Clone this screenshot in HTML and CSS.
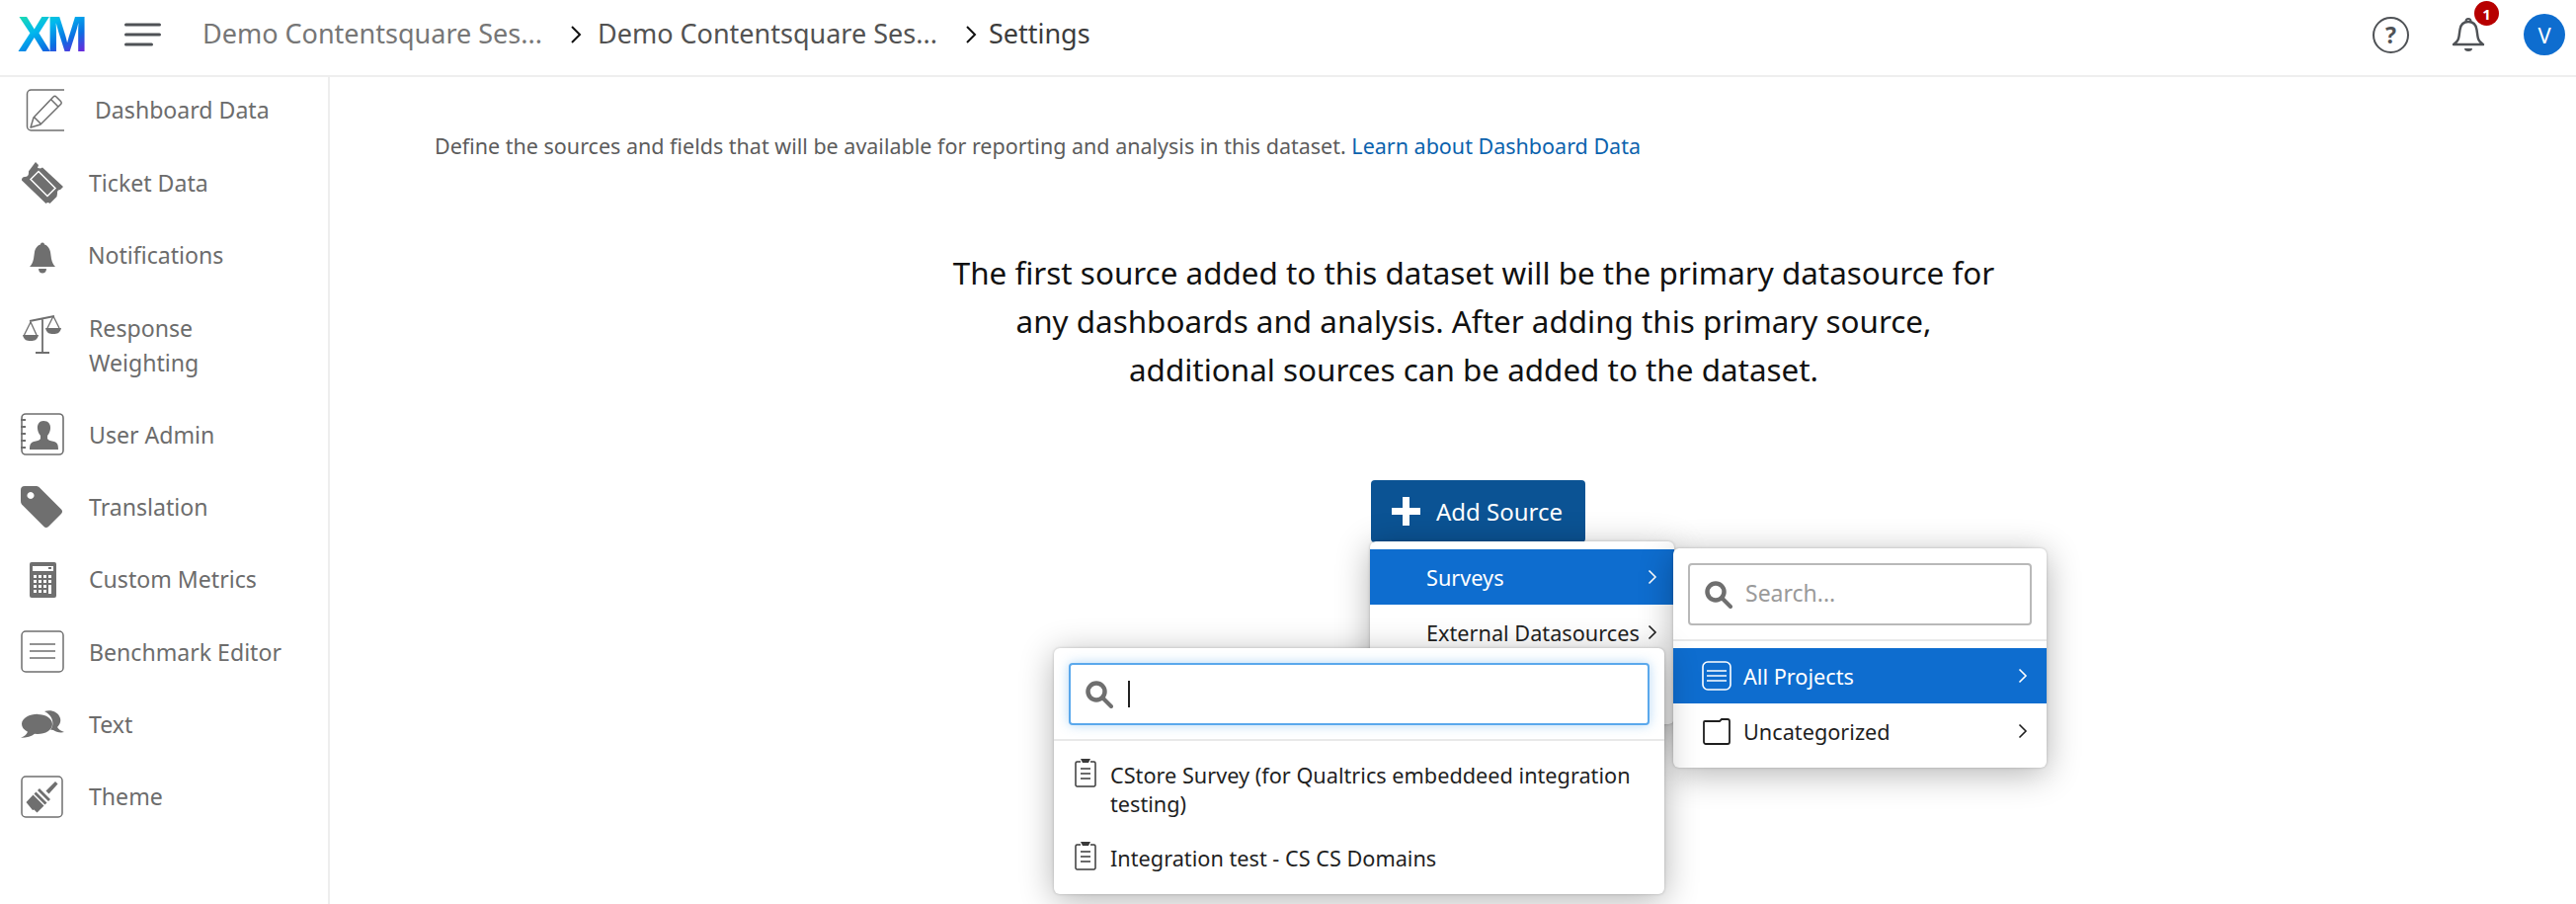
FILE: index.html
```html
<!DOCTYPE html>
<html lang="en">
<head>
<meta charset="utf-8">
<title>Settings</title>
<link rel="stylesheet" href="styles.css">
</head>
<body>
<div class="app">
  <header class="topbar">
    <div class="logo">XM</div>
    <svg class="burger" viewBox="0 0 37 24"><path d="M1.500 2h34M1.500 12h34M1.500 22h26" fill="none" stroke="#4f5256" stroke-width="3" stroke-linecap="round"/></svg>
    <nav class="crumbs">
      <span class="crumb crumb-first">Demo Contentsquare Ses...</span>
      <svg class="crumb-sep" viewBox="0 0 12 20"><path d="M2 2l8 8-8 8" fill="none" stroke="#111" stroke-width="2"/></svg>
      <span class="crumb crumb-second">Demo Contentsquare Ses...</span>
      <svg class="crumb-sep" viewBox="0 0 12 20"><path d="M2 2l8 8-8 8" fill="none" stroke="#111" stroke-width="2"/></svg>
      <span class="crumb crumb-last">Settings</span>
    </nav>
    <div class="top-actions">
      <span class="help">?</span>
      <span class="bell-wrap">
        <svg class="bell" viewBox="0 0 34 38"><path d="M2 29c3-2 5-4 5.500-8l1-7c.7-5 4-8 8.500-8s7.800 3 8.500 8l1 7c.5 4 2.500 6 5.500 8z" fill="none" stroke="#4f5256" stroke-width="2.400" stroke-linejoin="round"/><path d="M14.500 5.500a2.500 2.500 0 0 1 5 0" fill="none" stroke="#4f5256" stroke-width="2"/><path d="M13 33h8a4 3 0 0 1-8 0z" fill="#4f5256"/></svg>
        <span class="badge">1</span>
      </span>
      <span class="avatar">V</span>
    </div>
  </header>

  <div class="main">
    <aside class="sidebar">
      <div class="side-item item-dash">
        <svg class="ico" viewBox="0 0 44 44"><rect x="6.500" y="1" width="41" height="41" rx="4" fill="none" stroke="#6f6f6f" stroke-width="1.500"/><path d="M36 8l4.500 4.500a2 2 0 0 1 0 3L20 36l-10 3 3-10L33 8a2 2 0 0 1 3 0zM31 11l7 7M14 29l6 6" fill="none" stroke="#6f6f6f" stroke-width="1.500" stroke-linejoin="round"/></svg>
        <span>Dashboard Data</span>
      </div>
      <div class="side-item">
        <svg class="ico" viewBox="0 0 44 44"><path d="M15 0l3 3-1 3 3 .5 2-1L43 25l-3 3a3 3 0 0 0-3 3v1l-.5 3-7 7a3 3 0 0 0-4 0L1 18.500a3 3 0 0 1 3-3.500 4 4 0 0 0 4-4 3 3 0 0 1 1-3z" fill="#6f6f6f"/><path d="M18 9.500L35 26.500 27 34.500 10 17.500z" fill="none" stroke="#fff" stroke-width="1.500"/></svg>
        <span>Ticket Data</span>
      </div>
      <div class="side-item item-notif">
        <svg class="ico" viewBox="0 0 44 44"><path d="M9 33c2-2 3-4 4-8l1-7c.7-4 3.500-7 6-7.500a2 2 0 0 1 4 0c2.500.5 5.300 3.500 6 7.500l1 7c1 4 2 6 4 8z" fill="#6f6f6f"/><path d="M18 35h8c0 6-8 6-8 0z" fill="#6f6f6f"/></svg>
        <span>Notifications</span>
      </div>
      <div class="side-item side-item-two">
        <svg class="ico" viewBox="0 0 44 44"><path d="M22 7v35M15 42h14M9 10l25-5" fill="none" stroke="#6f6f6f" stroke-width="1.800"/><path d="M10 11L3.500 24M10 11l6 13M33 5l-6 12M33 5l6 12" fill="none" stroke="#6f6f6f" stroke-width="1.300"/><path d="M2 24h16c-1 5-4 6-8 6s-7-1-8-6zM25 17h16c-1 5-4 6-8 6s-7-1-8-6z" fill="#6f6f6f"/></svg>
        <span>Response<br>Weighting</span>
      </div>
      <div class="side-item">
        <svg class="ico" viewBox="0 0 44 44"><rect x="1" y="1" width="42" height="41" rx="4" fill="none" stroke="#6f6f6f" stroke-width="1.600"/><path d="M0 7h5M0 14h5M0 21h5M0 28h5M0 35h5" stroke="#6f6f6f" stroke-width="1.800"/><path d="M23 8c5 0 7.500 3.500 7 8-.3 3-1.500 5-3 7v3c1 2 4 2 7 3 3 1 4 3 4 8H9c0-5 1-7 4-8 3-1 6-1 7-3v-3c-1.500-2-2.700-4-3-7-.5-4.500 2-8 6-8z" fill="#6f6f6f"/></svg>
        <span>User Admin</span>
      </div>
      <div class="side-item">
        <svg class="ico" viewBox="0 0 44 44"><path fill-rule="evenodd" d="M4 0h11c2 0 3 .5 4 1.500l22 22a3 3 0 0 1 0 4.500L28 41a3 3 0 0 1-4.500 0L2 19.500C.5 18 0 17 0 15V4a4 4 0 0 1 4-4zm6 6a3.500 3.500 0 1 0 .01 0z" fill="#6f6f6f"/></svg>
        <span>Translation</span>
      </div>
      <div class="side-item">
        <svg class="ico" viewBox="0 0 44 44"><rect x="9" y="4" width="27" height="36" rx="2" fill="#6f6f6f"/><rect x="12" y="8" width="21" height="5" fill="#fff"/><rect x="28" y="9" width="3" height="2" fill="#6f6f6f"/><path d="M13 17h3v3h-3zM18 17h3v3h-3zM23 17h3v3h-3zM28 17h3v3h-3zM13 22h3v3h-3zM18 22h3v3h-3zM23 22h3v3h-3zM28 22h3v3h-3zM13 27h3v3h-3zM18 27h3v3h-3zM23 27h3v3h-3zM28 27h3v9h-3zM13 32h3v3h-3zM18 32h3v3h-3zM23 32h3v3h-3z" fill="#fff"/></svg>
        <span>Custom Metrics</span>
      </div>
      <div class="side-item">
        <svg class="ico" viewBox="0 0 44 44"><rect x="1" y="1" width="42" height="41" rx="4" fill="none" stroke="#6f6f6f" stroke-width="1.500"/><path d="M9 14h26M9 21h26M9 28h26" stroke="#6f6f6f" stroke-width="1.500"/></svg>
        <span>Benchmark Editor</span>
      </div>
      <div class="side-item">
        <svg class="ico" viewBox="0 0 44 44"><path d="M24 9c6-2 14 0 16 7 1 4-1 7-3 9 1 2 4 4 7 5-4 1-8 0-11-2l-3-.5c3-3 3-8 1-12-1-2-4-5-7-6.500z" fill="#6f6f6f"/><path d="M17 12c8 0 15 4 15 10s-7 10-15 10l-3-.3c-3 2.500-8 4-14 4 3-1 6-3 7-6-4-2-6-5-6-8 0-6 8-10 16-10z" fill="#6f6f6f"/></svg>
        <span>Text</span>
      </div>
      <div class="side-item">
        <svg class="ico" viewBox="0 0 44 44"><rect x="1" y="1" width="41" height="41" rx="4" fill="none" stroke="#6f6f6f" stroke-width="1.500"/><path d="M25.500 15.500L35 6l2.500 2.500-9 10z" fill="#6f6f6f"/><path d="M19 13l11 11-2 2-11-11zM15.500 16.500l11 11-2 2-11-11z" fill="#6f6f6f"/><path d="M12.500 19.500l11 11-7 7-3-3-1.500.5L5.500 27z" fill="#6f6f6f"/></svg>
        <span>Theme</span>
      </div>
    </aside>

    <main class="content">
      <p class="intro">Define the sources and fields that will be available for reporting and analysis in this dataset. <a class="link" href="#">Learn about Dashboard Data</a></p>
      <h1 class="lead">The first source added to this dataset will be the primary datasource for<br>any dashboards and analysis. After adding this primary source,<br>additional sources can be added to the dataset.</h1>

      <div class="source">
        <button class="add-btn" type="button">
          <svg class="plus" viewBox="0 0 29 29"><path d="M11 0h7v11h11v7H18v11h-7V18H0v-7h11z" fill="#fff"/></svg>
          Add Source
        </button>

        <div class="menu menu-types">
          <div class="row row-active"><span class="row-label">Surveys</span><svg class="chev" viewBox="0 0 10 16"><path d="M1.500 1.500L8 8l-6.500 6.500" fill="none" stroke="currentColor" stroke-width="1.600"/></svg></div>
          <div class="row"><span class="row-label">External Datasources</span><svg class="chev" viewBox="0 0 10 16"><path d="M1.500 1.500L8 8l-6.500 6.500" fill="none" stroke="currentColor" stroke-width="1.600"/></svg></div>
        </div>

        <div class="menu menu-projects">
          <div class="search-wrap">
            <div class="search">
              <svg class="mag" viewBox="0 0 28 28"><circle cx="11" cy="11" r="8.500" fill="none" stroke="#6f6f6f" stroke-width="4.500"/><path d="M17 17l9 9" stroke="#6f6f6f" stroke-width="4" stroke-linecap="round"/></svg>
              <span class="placeholder">Search...</span>
            </div>
          </div>
          <div class="row row-active"><svg class="row-ico" viewBox="0 0 30 30"><rect x="1" y="1" width="28" height="28" rx="5" fill="none" stroke="#fff" stroke-width="1.600"/><path d="M5 10h20M5 15h20M5 20h20" stroke="#fff" stroke-width="1.600"/></svg><span class="row-label">All Projects</span><svg class="chev" viewBox="0 0 10 16"><path d="M1.500 1.500L8 8l-6.500 6.500" fill="none" stroke="currentColor" stroke-width="1.600"/></svg></div>
          <div class="row"><svg class="row-ico" viewBox="0 0 30 30"><path d="M3 5h15l2-2h6a2 2 0 0 1 2 2v21a2 2 0 0 1-2 2H4a2 2 0 0 1-2-2V6a1 1 0 0 1 1-1z" fill="none" stroke="#1f1f1f" stroke-width="1.800"/></svg><span class="row-label">Uncategorized</span><svg class="chev" viewBox="0 0 10 16"><path d="M1.500 1.500L8 8l-6.500 6.500" fill="none" stroke="currentColor" stroke-width="1.600"/></svg></div>
        </div>

        <div class="menu menu-surveys">
          <div class="search-wrap">
            <div class="search search-focus">
              <svg class="mag" viewBox="0 0 28 28"><circle cx="11" cy="11" r="8.500" fill="none" stroke="#6f6f6f" stroke-width="4.500"/><path d="M17 17l9 9" stroke="#6f6f6f" stroke-width="4" stroke-linecap="round"/></svg>
              <span class="caret"></span>
            </div>
          </div>
          <div class="survey">
            <svg class="clip" viewBox="0 0 22 29"><path d="M6 3H2.500A1.500 1.500 0 0 0 1 4.500v22A1.500 1.500 0 0 0 2.500 28h17a1.500 1.500 0 0 0 1.500-1.500v-22A1.500 1.500 0 0 0 19.500 3H16" fill="none" stroke="#3a3a3a" stroke-width="1.500"/><path d="M6 0h10l-2 4H8z" fill="#3a3a3a"/><path d="M6 10h10M6 15h10M6 20h10" stroke="#3a3a3a" stroke-width="1.500"/></svg>
            <span>CStore Survey (for Qualtrics embeddeed integration testing)</span>
          </div>
          <div class="survey">
            <svg class="clip" viewBox="0 0 22 29"><path d="M6 3H2.500A1.500 1.500 0 0 0 1 4.500v22A1.500 1.500 0 0 0 2.500 28h17a1.500 1.500 0 0 0 1.500-1.500v-22A1.500 1.500 0 0 0 19.500 3H16" fill="none" stroke="#3a3a3a" stroke-width="1.500"/><path d="M6 0h10l-2 4H8z" fill="#3a3a3a"/><path d="M6 10h10M6 15h10M6 20h10" stroke="#3a3a3a" stroke-width="1.500"/></svg>
            <span>Integration test - CS CS Domains</span>
          </div>
        </div>
      </div>
    </main>
  </div>
</div>
</body>
</html>
```
FILE: styles.css
```css
* { box-sizing: border-box; }
html, body { margin: 0; padding: 0; background: #fff; }
body { font-family: "Noto Sans", "Liberation Sans", sans-serif; color: #1f1f1f; }
.app { width: 2608px; height: 915px; display: flex; flex-direction: column; overflow: hidden; }

/* top bar */
.topbar { height: 78px; flex: none; display: flex; align-items: center; border-bottom: 2px solid #eeeeee; padding-left: 18px; padding-bottom: 6px; }
.logo { width: 70px; height: 42px; margin-right: 38px; font-family: "Liberation Sans", sans-serif; font-weight: 700; font-size: 50px; line-height: 42px; letter-spacing: -4px; background: linear-gradient(155deg, #20e0a8 0%, #00b8ee 35%, #0a6fe2 65%, #6a28dc 92%); -webkit-background-clip: text; background-clip: text; color: transparent; }
.burger { width: 37px; height: 24px; margin-right: 42px; }
.crumbs { display: flex; align-items: center; font-size: 27px; padding-bottom: 3px; }
.crumb-first { color: #767676; }
.crumb-second { color: #525252; }
.crumb-last { color: #3c3c3c; }
.crumb-sep { width: 12px; height: 20px; margin: 3px 16px 0 28px; }
.crumb-sep + .crumb-last { margin-left: -4px; }
.top-actions { margin-left: auto; display: flex; align-items: center; padding-right: 11px; }
.help { width: 37px; height: 37px; border: 2.500px solid #4f5256; border-radius: 50%; display: flex; align-items: center; justify-content: center; font-size: 23px; font-weight: 700; color: #4f5256; }
.bell-wrap { position: relative; margin-left: 43px; width: 34px; height: 38px; display: block; }
.bell { width: 34px; height: 38px; display: block; }
.badge { position: absolute; top: -15px; left: 23px; width: 25px; height: 25px; border-radius: 50%; background: #b70000; color: #fff; font-size: 15px; font-weight: 700; display: flex; align-items: center; justify-content: center; }
.avatar { margin-left: 39px; width: 42px; height: 42px; border-radius: 50%; background: #0e6dcf; color: #fff; font-size: 22px; display: flex; align-items: center; justify-content: center; }

/* layout */
.main { flex: 1; display: flex; min-height: 0; }
.sidebar { width: 334px; flex: none; border-right: 2px solid #eeeeee; }

/* sidebar */
.side-item { height: 73.300px; display: flex; align-items: center; padding-left: 21px; font-size: 23.100px; color: #6c6c6c; line-height: 35px; }
.side-item-two { height: 108px; }
.side-item-two .ico { align-self: flex-start; margin-top: 19px; }
.ico { width: 44px; height: 44px; margin-right: 25px; flex: none; }
.item-dash { height: 71px; padding-bottom: 4px; }
.item-dash span { margin-left: 6px; }
.item-notif span { margin-left: -1px; }

/* content */
.content { flex: 1; position: relative; min-width: 0; padding-top: 54px; }
.intro { margin: 0 0 0 106px; font-size: 21.500px; line-height: 32px; color: #5c5c5c; }
.link { color: #0b62ad; text-decoration: none; }
.lead { margin: 87px 0 0 608px; width: 1100px; text-align: center; font-size: 31.400px; font-weight: 400; line-height: 49px; color: #111; }

/* source button and menus */
.source { position: relative; margin: 88px 0 0 1054px; width: 217px; }
.add-btn { display: flex; align-items: center; width: 217px; height: 63px; padding: 0 0 0 21px; border: 0; border-radius: 4px; background: #0b5394; color: #fff; font: 24px "Noto Sans", sans-serif; }
.plus { width: 29px; height: 29px; margin-right: 16px; }
.menu { position: absolute; background: #fff; border-radius: 6px; box-shadow: 0 6px 34px rgba(0,0,0,.30), 0 0 3px rgba(0,0,0,.22); font-size: 21.700px; color: #1f1f1f; }
.menu-types { left: -1px; top: 62px; width: 308px; height: 185px; padding-top: 8px; z-index: 1; }
.menu-projects { left: 306px; top: 69px; width: 378px; height: 222px; z-index: 2; }
.menu-surveys { left: -321px; top: 170px; width: 618px; height: 249px; z-index: 3; }

.row { position: relative; height: 56px; display: flex; align-items: center; padding-top: 1px; }
.row-active { background: #0e6dcf; color: #fff; }
.menu-types .row-label { margin-left: 57px; }
.row-ico { width: 30px; height: 30px; margin-left: 29px; margin-right: 12px; flex: none; margin-top: -1px; }
.chev { position: absolute; right: 19px; top: 20px; width: 10px; height: 16px; }
.menu-types .chev { right: 17px; }

.search-wrap { padding: 15px 15px 14px; border-bottom: 2px solid #e9e9e9; margin-bottom: 7px; }
.search { height: 63px; display: flex; align-items: center; padding-left: 15px; border: 2px solid #b9b9b9; border-radius: 4px; background: #fff; }
.search-focus { border-color: #5aa8ec; box-shadow: 0 0 12px rgba(90,168,236,.45); }
.mag { width: 28px; height: 28px; flex: none; }
.placeholder { margin: 0 0 4px 13px; color: #9a9a9a; font-size: 23px; }
.caret { width: 2px; height: 27px; margin-left: 15px; background: #222; }

.survey { display: flex; align-items: flex-start; padding: 13px 24px 13px 21px; line-height: 29px; }
.clip { width: 22px; height: 29px; margin-right: 14px; margin-top: -2px; flex: none; }
```
